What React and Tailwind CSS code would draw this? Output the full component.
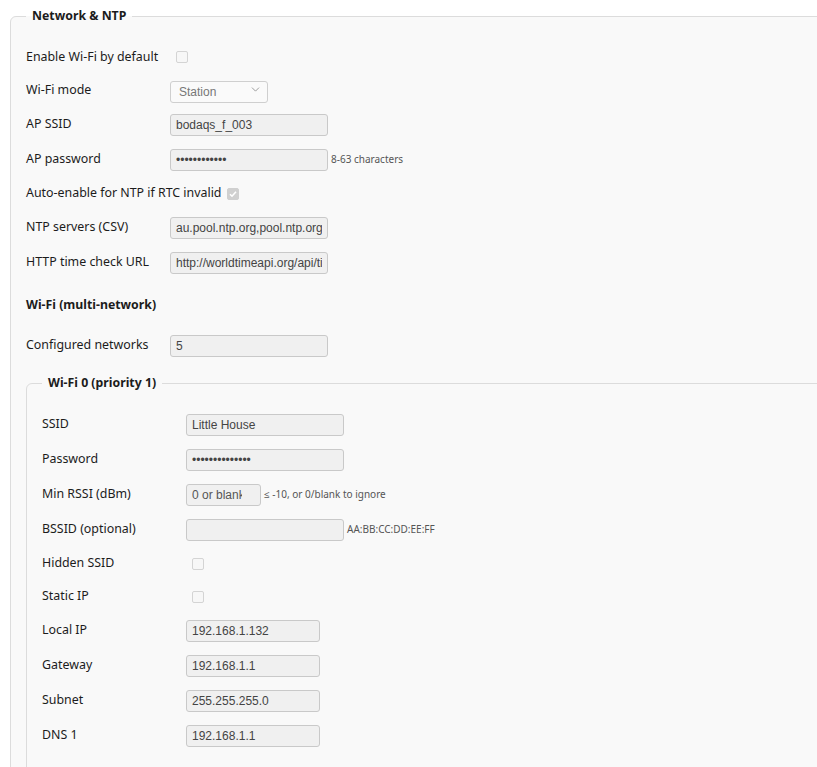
import { ChevronDown } from "lucide-react";

const labelFont = { fontFamily: '"Noto Sans", "Open Sans", sans-serif' };

function Row({ label, h = "h-[35px]", children }) {
  return (
    <div className={`flex items-center ${h}`}>
      <div className="min-w-[144px] text-[12.4px] text-[#1c1c1c]">{label}</div>
      {children}
    </div>
  );
}

function TextInput({ value, w = "w-[158px]", pr = "pr-[5px]", placeholder }) {
  return (
    <input
      type="text"
      defaultValue={value}
      placeholder={placeholder}
      readOnly
      className={`h-[22px] ${w} ${pr} rounded-[3px] border border-[#c9c9c9] bg-[#f0f0f0] pl-[5px] text-[12px] text-[#444] outline-none placeholder:text-[#555] font-['Liberation_Sans',Arial,sans-serif]`}
    />
  );
}

function Check({ checked }) {
  return (
    <span
      className={`ml-[6px] flex h-[12px] w-[12px] items-center justify-center rounded-[2px] border ${
        checked ? "border-[#d0d0d0] bg-[#d0d0d0]" : "border-[#d4d4d4] bg-[#f7f7f7]"
      }`}
    >
      {checked && (
        <svg width="10" height="10" viewBox="0 0 10 10">
          <path d="M2 5.2l2 2 4-4.4" fill="none" stroke="#fff" strokeWidth="1.6" />
        </svg>
      )}
    </span>
  );
}

function Hint({ children }) {
  return <span className="ml-[3px] text-[10px] text-[#555]">{children}</span>;
}

function Fieldset({ legend, className = "", pt = "pt-[15px]", children }) {
  return (
    <fieldset
      className={`rounded-[6px] border border-[#dcdcdc] bg-[#f9f9f9] px-[15px] ${pt} ${className}`}
    >
      <legend className="px-[6px] text-[12.3px] leading-[20px] font-bold text-[#1c1c1c]">
        {legend}
      </legend>
      {children}
    </fieldset>
  );
}

export default function App() {
  return (
    <div className="h-[767px] w-[817px] overflow-hidden bg-white pl-[10px] pt-[6px]" style={labelFont}>
      <Fieldset legend="Network & NTP" className="w-[1000px] pb-6">
        <Row label="Enable Wi-Fi by default" h="h-[32px]">
          <Check />
        </Row>
        <Row label="Wi-Fi mode" h="h-[34px]">
          <div className="relative">
            <select
              disabled
              className="h-[22px] w-[98px] appearance-none rounded-[3px] border border-[#cfcfcf] bg-[#fafafa] pl-[8px] text-[12px] text-[#777] font-['Liberation_Sans',Arial,sans-serif]"
            >
              <option>Station</option>
            </select>
            <ChevronDown
              size={13}
              strokeWidth={1.5}
              className="pointer-events-none absolute right-[6px] top-[5px] text-[#888]"
            />
          </div>
        </Row>
        <Row label="AP SSID">
          <TextInput value="bodaqs_f_003" />
        </Row>
        <Row label="AP password">
          <TextInput value="••••••••••••" />
          <Hint>8-63 characters</Hint>
        </Row>
        <Row label="Auto-enable for NTP if RTC invalid" h="h-[33px]">
          <Check checked />
        </Row>
        <Row label="NTP servers (CSV)">
          <TextInput value="au.pool.ntp.org,pool.ntp.org" />
        </Row>
        <Row label="HTTP time check URL">
          <TextInput value="http://worldtimeapi.org/api/timezone" />
        </Row>
        <div className="flex h-[48px] items-center pt-[2px] text-[12.3px] font-bold text-[#1c1c1c]">
          Wi-Fi (multi-network)
        </div>
        <Row label="Configured networks">
          <TextInput value="5" />
        </Row>

        <Fieldset legend="Wi-Fi 0 (priority 1)" className="mt-[10px] w-[950px] pb-6" pt="pt-[14px]">
          <Row label="SSID">
            <TextInput value="Little House" />
          </Row>
          <Row label="Password">
            <TextInput value="••••••••••••••" />
          </Row>
          <Row label="Min RSSI (dBm)">
            <TextInput placeholder="0 or blank" w="w-[75px]" pr="pr-[18px]" />
            <Hint>≤ -10, or 0/blank to ignore</Hint>
          </Row>
          <Row label="BSSID (optional)">
            <TextInput />
            <Hint>AA:BB:CC:DD:EE:FF</Hint>
          </Row>
          <Row label="Hidden SSID" h="h-[33px]">
            <Check />
          </Row>
          <Row label="Static IP" h="h-[33px]">
            <Check />
          </Row>
          <Row label="Local IP">
            <TextInput value="192.168.1.132" w="w-[134px]" />
          </Row>
          <Row label="Gateway">
            <TextInput value="192.168.1.1" w="w-[134px]" />
          </Row>
          <Row label="Subnet">
            <TextInput value="255.255.255.0" w="w-[134px]" />
          </Row>
          <Row label="DNS 1">
            <TextInput value="192.168.1.1" w="w-[134px]" />
          </Row>
        </Fieldset>
      </Fieldset>
    </div>
  );
}
